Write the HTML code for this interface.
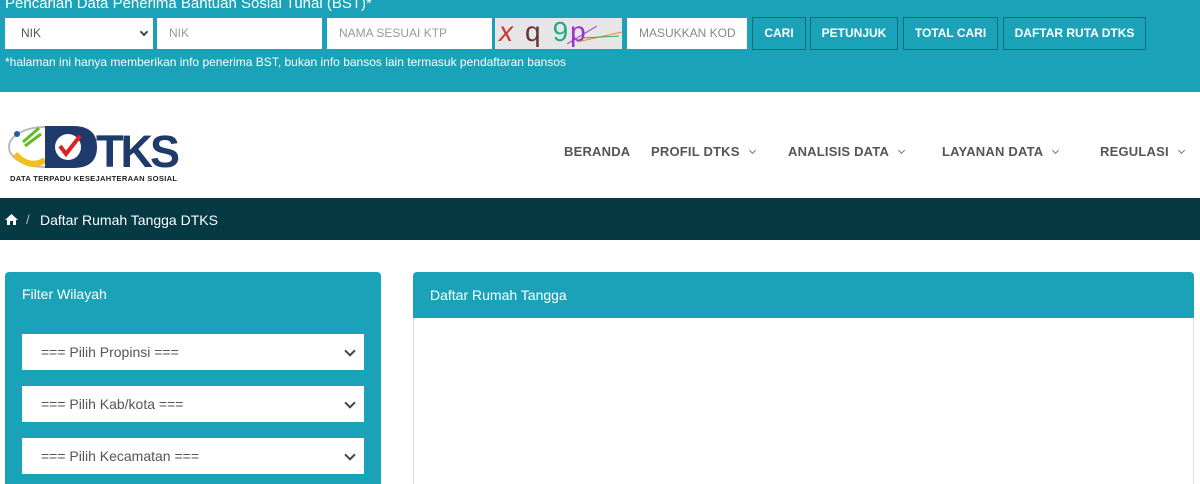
<!DOCTYPE html>
<html style="width:1200px;height:484px;overflow:hidden"><head><meta charset="utf-8"><style>
*{box-sizing:border-box;margin:0;padding:0}
body{width:1200px;height:484px;overflow:hidden;background:#fff;font-family:"Liberation Sans",sans-serif;position:relative}
.abs{position:absolute}
.top{left:0;top:0;width:1200px;height:92px;background:#1aa3b8}
.inp{background:#fff;height:31px;top:18px;font-size:12px;color:#999;line-height:31px;padding-left:12px}
.btn{top:17px;height:33px;border:1px solid #0d6c7a;color:#fff;font-size:12px;font-weight:bold;line-height:31px;text-align:center;background:#1aa3b8}
.nav{top:144px;font-size:13px;font-weight:bold;color:#555;letter-spacing:.2px}
.chev{display:inline-block;width:5px;height:5px;border-right:1px solid #777;border-bottom:1px solid #777;transform:rotate(45deg);margin-left:10px;position:relative;top:-3px}
.sel{left:22px;width:342px;height:36px;background:#fff;font-size:14px;color:#555;line-height:36px;padding-left:19px}
.sel:after{content:"";position:absolute;right:10px;top:13px;width:6px;height:6px;border-right:2px solid #444;border-bottom:2px solid #444;transform:rotate(45deg)}
</style></head><body>
<div class="abs top"></div>
<div class="abs" style="left:5px;top:-5px;color:#fff;font-size:15px">Pencarian Data Penerima Bantuan Sosial Tunai (BST)*</div>
<div class="abs inp" style="left:5px;width:148px;color:#555;padding-left:16px">NIK<span class="abs" style="right:6px;top:11px;width:6px;height:6px;border-right:2px solid #444;border-bottom:2px solid #444;transform:rotate(45deg)"></span></div>
<div class="abs inp" style="left:157px;width:165px">NIK</div>
<div class="abs inp" style="left:327px;width:165px">NAMA SESUAI KTP</div>
<div class="abs" style="left:495px;top:18px;width:127px;height:31px;background:#e6e6e6;font-size:28px;line-height:28px;overflow:hidden">
<span style="color:#c33;margin-left:4px;font-style:italic">x</span><span style="color:#633;margin-left:12px">q</span><span style="color:#2a8;margin-left:12px">9</span><span style="color:#93c;margin-left:2px">p</span>
<svg class="abs" style="left:72px;top:6px" width="55" height="22"><path d="M0 20 L30 2" stroke="#93c"/><path d="M10 18 L55 8" stroke="#e84"/><path d="M15 14 L52 12" stroke="#3a5"/></svg></div>
<div class="abs inp" style="left:627px;width:120px;color:#888">MASUKKAN KOD</div>
<div class="abs btn" style="left:752px;width:54px">CARI</div>
<div class="abs btn" style="left:810px;width:88px">PETUNJUK</div>
<div class="abs btn" style="left:903px;width:95px">TOTAL CARI</div>
<div class="abs btn" style="left:1003px;width:143px">DAFTAR RUTA DTKS</div>
<div class="abs" style="left:5px;top:55px;color:#fff;font-size:12px">*halaman ini hanya memberikan info penerima BST, bukan info bansos lain termasuk pendaftaran bansos</div>

<svg class="abs" style="left:5px;top:122px" width="180" height="62">
<ellipse cx="40" cy="25" rx="36" ry="20" fill="none" stroke="#bbb" stroke-width="2"/>
<path d="M10 32 Q25 48 40 38" stroke="#f0c020" stroke-width="6" fill="none"/>
<path d="M18 20 L34 6 M20 24 L36 12" stroke="#6b2" stroke-width="3"/>
<circle cx="12" cy="12" r="3" fill="#1a5faa"/>
<path d="M40 4 H68 Q92 4 92 25 Q92 46 68 46 H40 Z" fill="#1f3a6b"/>
<circle cx="63" cy="25" r="13" fill="#fff"/>
<path d="M55 24 L61 32 L75 14" stroke="#d22" stroke-width="4" fill="none"/>
<text x="91" y="45" font-family="Liberation Sans" font-weight="bold" font-size="45" fill="#1f3a6b" letter-spacing="-3">TKS</text>
<text x="5" y="59" font-family="Liberation Sans" font-weight="bold" font-size="7.6" fill="#222" textLength="167">DATA TERPADU KESEJAHTERAAN SOSIAL</text>
</svg>
<div class="abs nav" style="left:564px">BERANDA</div>
<div class="abs nav" style="left:651px">PROFIL DTKS<span class="chev"></span></div>
<div class="abs nav" style="left:788px">ANALISIS DATA<span class="chev"></span></div>
<div class="abs nav" style="left:942px">LAYANAN DATA<span class="chev"></span></div>
<div class="abs nav" style="left:1100px">REGULASI<span class="chev"></span></div>

<div class="abs" style="left:0;top:198px;width:1200px;height:42px;background:#053a44"></div>
<svg class="abs" style="left:5px;top:214px" width="13" height="11"><path d="M6.5 0 L13 6 H11 V11 H8 V7 H5 V11 H2 V6 H0 Z" fill="#fff"/></svg>
<div class="abs" style="left:26px;top:212px;color:#bbb;font-size:13px">/</div>
<div class="abs" style="left:40px;top:212px;color:#fff;font-size:14px">Daftar Rumah Tangga DTKS</div>

<div class="abs" style="left:5px;top:272px;width:376px;height:212px;background:#1aa3b8;border-radius:4px 4px 0 0"></div>
<div class="abs" style="left:22px;top:286px;color:#fff;font-size:14px">Filter Wilayah</div>
<div class="abs sel" style="top:334px">=== Pilih Propinsi ===</div>
<div class="abs sel" style="top:386px">=== Pilih Kab/kota ===</div>
<div class="abs sel" style="top:438px">=== Pilih Kecamatan ===</div>

<div class="abs" style="left:413px;top:272px;width:781px;height:212px;border:1px solid #ddd;border-bottom:none;border-radius:4px 4px 0 0"></div>
<div class="abs" style="left:413px;top:272px;width:781px;height:46px;background:#1aa3b8;border-radius:4px 4px 0 0"></div>
<div class="abs" style="left:430px;top:287px;color:#fff;font-size:14px">Daftar Rumah Tangga</div>
</body></html>
